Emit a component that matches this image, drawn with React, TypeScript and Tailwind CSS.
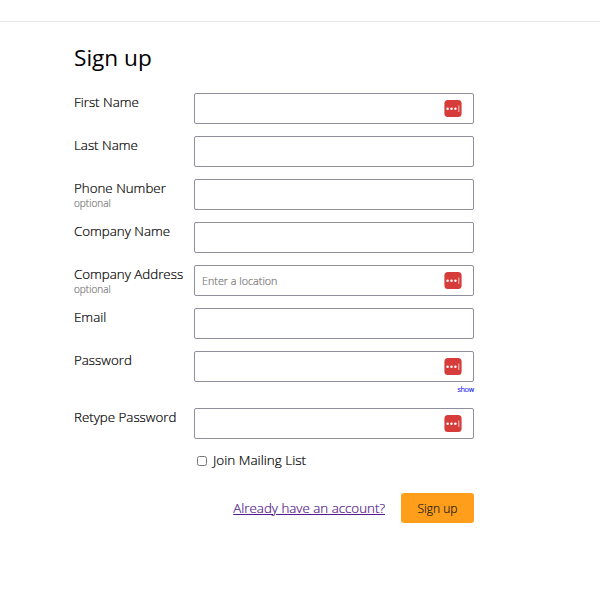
import type { ReactNode } from "react";

type Field = {
  id: string;
  label: string;
  type?: string;
  optional?: boolean;
  placeholder?: string;
  manager?: boolean;
  showToggle?: boolean;
};

const fields: Field[] = [
  { id: "firstName", label: "First Name", manager: true },
  { id: "lastName", label: "Last Name" },
  { id: "phone", label: "Phone Number", type: "tel", optional: true },
  { id: "company", label: "Company Name" },
  { id: "address", label: "Company Address", optional: true, placeholder: "Enter a location", manager: true },
  { id: "email", label: "Email", type: "email" },
  { id: "password", label: "Password", type: "password", manager: true, showToggle: true },
  { id: "retype", label: "Retype Password", type: "password", manager: true },
];

function ManagerIcon() {
  return (
    <svg className="h-[17px] w-[18px] shrink-0" viewBox="0 0 18 17" aria-hidden="true">
      <rect x="0.4" width="17.2" height="17" rx="3.5" fill="#d63c3a" />
      <g fill="#fff">
        <circle cx="3.6" cy="8.7" r="1.25" />
        <circle cx="7.5" cy="8.7" r="1.25" />
        <circle cx="11.4" cy="8.7" r="1.25" />
        <rect x="14.3" y="5.5" width="1" height="6.5" opacity="0.7" />
      </g>
    </svg>
  );
}

function Row({ field, children }: { field: Field; children?: ReactNode }) {
  return (
    <div className="flex items-start">
      <div className="h-[31px] w-[120px] shrink-0">
        <label htmlFor={field.id} className="block h-[18px] text-[13.333px] leading-[18px]">
          {field.label}
        </label>
        {field.optional && <div className="text-[10px] leading-[13px] text-[#777]">optional</div>}
      </div>
      <div className="w-[280px]">
        <div className="flex h-[31px] items-center rounded-[2px] border border-[#8f8f9d] pr-[11px] pl-[7px]">
          <input
            id={field.id}
            type={field.type ?? "text"}
            placeholder={field.placeholder}
            className="min-w-0 flex-1 pt-px text-[10.75px] outline-none placeholder:text-[#757575]"
          />
          {field.manager && <ManagerIcon />}
        </div>
        {children}
      </div>
    </div>
  );
}

export default function App() {
  return (
    <div className="min-h-screen bg-white font-['Open_Sans',sans-serif] text-black">
      <header className="h-[22px] border-b border-[#e7e7e7]" />

      <main className="ml-[74px] w-[400px] pt-5">
        <h1 className="mb-3.5 h-[37px] text-[22.6px] leading-[31px]">Sign up</h1>

        <form className="font-light [-webkit-text-stroke:0.2px]" onSubmit={(e) => e.preventDefault()}>
          <div className="flex flex-col gap-3">
            {fields.map((field) => (
              <Row key={field.id} field={field}>
                {field.showToggle && (
                  <button type="button" className="block h-[14px] w-full pt-0.5 text-right text-[7px] leading-[12px] text-[#0000ee]">
                    show
                  </button>
                )}
              </Row>
            ))}
          </div>

          <label className="mt-3 ml-[123px] flex h-[19px] items-center gap-1.5 text-[13.5px] leading-[19px]">
            <input type="checkbox" className="h-[10px] w-[10px]" />
            Join Mailing List
          </label>

          <div className="mt-[23px] flex items-center justify-end gap-4">
            <a href="#" className="pt-px text-[13.333px] text-[#551a8b] underline">
              Already have an account?
            </a>
            <button type="submit" className="h-[30px] w-[73px] rounded-[3px] bg-[#ff9e1b] pt-px text-[12px] text-[#1c1c1c]">
              Sign up
            </button>
          </div>
        </form>
      </main>
    </div>
  );
}
